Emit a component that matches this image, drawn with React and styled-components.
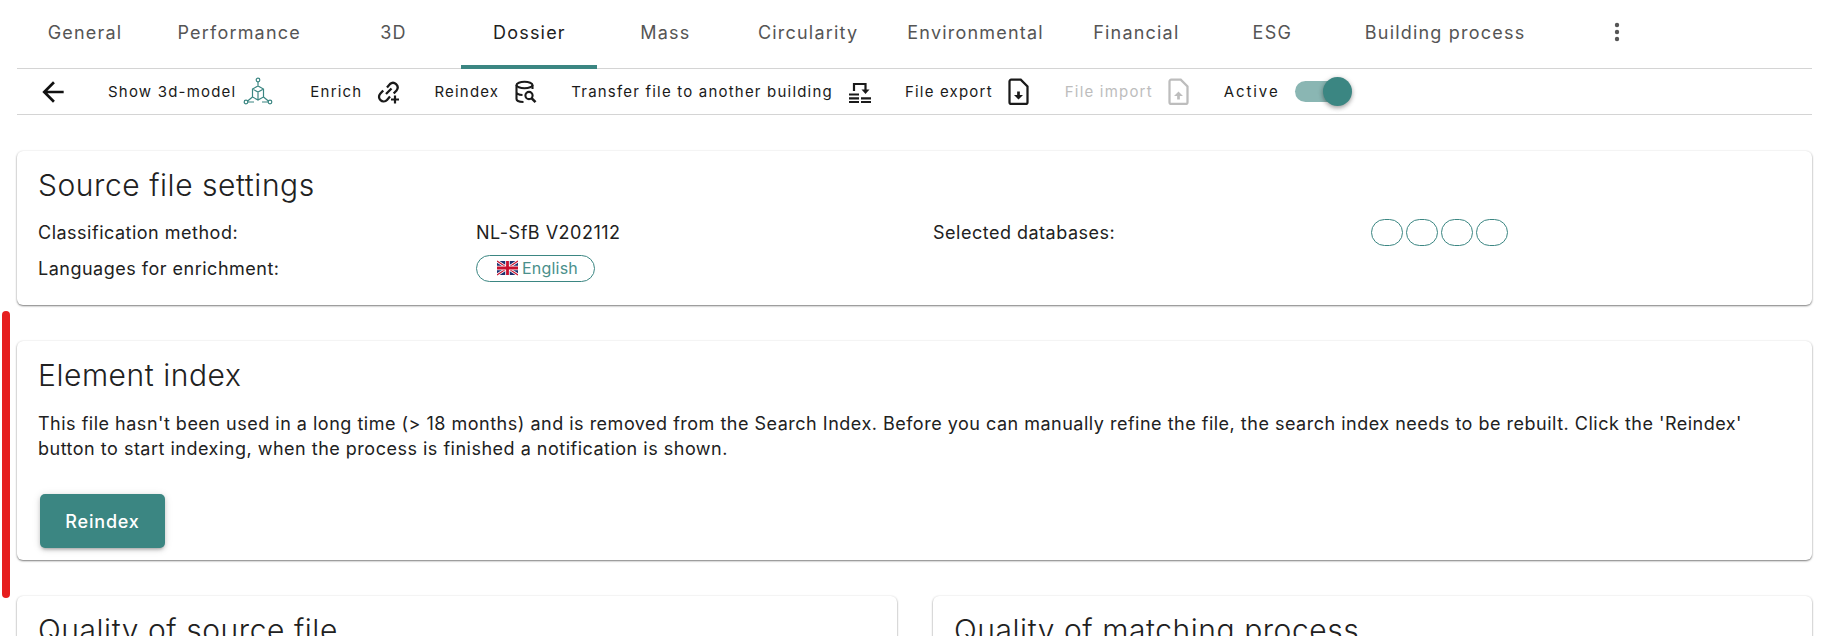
import React from "react";
import styled, { createGlobalStyle } from "styled-components";

const Global = createGlobalStyle`
  html, body { margin: 0; padding: 0; background: #fff; height: 636px; overflow: hidden; }
  body { font-family: Inter, "Liberation Sans", sans-serif; color: #212121; }
`;

const teal = "#3b8682";

const Page = styled.div`
  position: relative;
  height: 636px;
  overflow: hidden;
  padding: 0 9px 0 17px;
`;
const Marker = styled.div`
  position: absolute;
  left: 2px;
  top: 311px;
  width: 8px;
  height: 287px;
  border-radius: 4px;
  background: #e61e1e;
`;
const Tabs = styled.nav`
  display: flex;
  align-items: stretch;
  height: 68px;
  border-bottom: 1px solid #d4d4d4;
`;
const Tab = styled.div`
  position: relative;
  display: flex;
  align-items: center;
  justify-content: center;
  min-width: 136px;
  padding: 0 24.5px 3px;
  box-sizing: border-box;
  font-size: 18px;
  letter-spacing: 1.2px;
  color: ${(p) => (p.$active ? "#212121" : "#555")};
  ${(p) => p.$active && `&::after { content: ""; position: absolute; left: 0; right: 0; bottom: -1px; height: 4px; background: ${teal}; }`}
`;
const Kebab = styled.div`
  display: flex;
  align-items: center;
  justify-content: center;
  width: 48px;
  margin-left: 43px;
  color: #555;
  padding-bottom: 5px;
`;
const Toolbar = styled.div`
  display: flex;
  align-items: center;
  height: 45px;
  border-bottom: 1px solid #d4d4d4;
`;
const Back = styled.div`
  display: flex;
  width: 91px;
  padding-left: 20px;
  box-sizing: border-box;
  color: #111;
`;
const Action = styled.div`
  display: flex;
  align-items: center;
  gap: ${(p) => p.$gap || 15}px;
  margin-right: ${(p) => p.$mr ?? 33}px;
  font-size: 15px;
  letter-spacing: ${(p) => p.$ls || 1.2}px;
  color: ${(p) => (p.$disabled ? "#bdbdbd" : "#1a1a1a")};
`;
const Track = styled.div`
  position: relative;
  width: 45px;
  height: 21px;
  border-radius: 11px;
  background: #8ab6b3;
`;
const Knob = styled.div`
  position: absolute;
  right: -12px;
  top: -4px;
  width: 29px;
  height: 29px;
  border-radius: 50%;
  background: ${teal};
  box-shadow: 0 2px 4px rgba(0,0,0,.3), 0 1px 6px rgba(0,0,0,.12);
`;
const Card = styled.section`
  background: #fff;
  border-radius: 6px;
  box-sizing: border-box;
  padding: 14px 21px 0;
  box-shadow: 0 1px 2px rgba(0,0,0,.5), 0 0 3px rgba(0,0,0,.05);
`;
const Stack = styled.div`
  display: flex;
  flex-direction: column;
  gap: 36px;
  padding-top: 36px;
`;
const Title = styled.h2`
  margin: 0;
  font-size: 30px;
  line-height: 40px;
  font-weight: 300;
  letter-spacing: 0.55px;
  color: #212121;
`;
const SettingsGrid = styled.div`
  display: grid;
  grid-template-columns: 438px 457px 438px 1fr;
  grid-auto-rows: 36px;
  align-items: center;
  margin-top: 9px;
  padding-bottom: 19px;
  font-size: 18px;
  letter-spacing: 0.5px;
`;
const Chips = styled.div`
  display: flex;
  gap: 3px;
`;
const Chip = styled.div`
  display: flex;
  align-items: center;
  justify-content: center;
  gap: 4px;
  box-sizing: border-box;
  width: ${(p) => p.$w}px;
  height: 27px;
  padding-left: ${(p) => (p.$w > 40 ? 4 : 0)}px;
  border: 1px solid ${teal};
  border-radius: 14px;
  color: #4a8f8b;
  font-size: 16px;
  letter-spacing: 0.2px;
`;
const Para = styled.p`
  margin: 16px 0 0;
  font-size: 18px;
  line-height: 25px;
  letter-spacing: 0.5px;
  color: #212121;
`;
const Button = styled.button`
  display: block;
  width: 125px;
  height: 54px;
  margin: 33px 0 12px 2px;
  border: 0;
  border-radius: 5px;
  background: ${teal};
  color: #fff;
  font: 500 18px Inter, sans-serif;
  letter-spacing: 0.8px;
  box-shadow: 0 3px 3px -2px rgba(0,0,0,.2), 0 2px 4px rgba(0,0,0,.14), 0 1px 8px rgba(0,0,0,.12);
`;
const Split = styled.div`
  display: grid;
  grid-template-columns: 880px 879px;
  gap: 36px;
`;

const Ico = ({ children, size = 24, color = "currentColor" }) => (
  <svg width={size} height={size} viewBox="0 0 24 24" fill="none" stroke={color} strokeWidth="2" style={{ display: "block", flex: "none" }}>{children}</svg>
);

const CubeIcon = () => (
  <svg width="30" height="30" viewBox="0 0 30 30" fill="none" stroke={teal} strokeWidth="1.2" style={{ display: "block" }}>
    <circle cx="15" cy="3" r="1.8" /><circle cx="3" cy="25" r="1.8" /><circle cx="27" cy="25" r="1.8" />
    <path d="M15 5v4M9.5 12l5.5-3 5.5 3v8l-5.5 3-5.5-3zM9.5 12l5.5 3 5.5-3M15 15v8M4.6 24l4.9-4M25.4 24l-4.9-4M5 25h6M25 25h-6" />
  </svg>
);
const LinkPlus = () => (
  <Ico>
    <path d="M10 7.5l3-3.5a4.6 4.6 0 0 1 6.7 6.2l-3 3.3" strokeWidth="2.3" />
    <path d="M13 16.5l-3 3.4a4.6 4.6 0 0 1-6.800-6.200l3-3.300" strokeWidth="2.3" />
    <path d="M9 14l5.500-5.500" strokeWidth="2.3" />
    <path d="M18 15.500v8M14 19.500h8" strokeWidth="2.2" />
  </Ico>
);
const DbSearch = () => (
  <Ico>
    <ellipse cx="10.5" cy="5" rx="8" ry="3.2" strokeWidth="2.1" />
    <path d="M2.500 5v14c0 1.700 3 3 7 3M2.500 12c0 1.500 2.500 2.800 6 3M18.500 5v4" strokeWidth="2.1" />
    <circle cx="15" cy="15.5" r="3.6" strokeWidth="2.1" />
    <path d="M17.500 18.200l4 4" strokeWidth="2.6" />
  </Ico>
);
const Transfer = () => (
  <Ico>
    <path d="M6 11V4h11.500v6" strokeWidth="2.2" />
    <path d="M13.500 9.500h8l-4 4.500z" fill="currentColor" stroke="none" />
    <path d="M1 14.500h10M1 18.300h10M1 22h10M13 18.300h10M13 22h10" strokeWidth="2.2" />
  </Ico>
);
const FileIcon = ({ up }) => (
  <Ico size={27}>
    <path d="M5.500 1.500h8.500l6 6v14a1.500 1.500 0 0 1-1.500 1.500h-13A1.500 1.500 0 0 1 4 21.500V3a1.500 1.500 0 0 1 1.500-1.500z" strokeWidth="2" />
    {up
      ? <path d="M12 12l-4 4h2.800v3h2.400v-3H16z" fill="currentColor" stroke="none" />
      : <path d="M12 19l-4-4h2.800v-3h2.400v3H16z" fill="currentColor" stroke="none" />}
  </Ico>
);

const tabs = ["General", "Performance", "3D", "Dossier", "Mass", "Circularity", "Environmental", "Financial", "ESG", "Building process"];

export default function App() {
  return (
    <Page>
      <Global />
      <Marker />
      <Tabs>
        {tabs.map((t) => <Tab key={t} $active={t === "Dossier"}>{t}</Tab>)}
        <Kebab>
          <svg width="24" height="24" viewBox="0 0 24 24" fill="currentColor"><circle cx="12" cy="5" r="2.2" /><circle cx="12" cy="12" r="2.2" /><circle cx="12" cy="19" r="2.2" /></svg>
        </Kebab>
      </Tabs>
      <Toolbar>
        <Back>
          <svg width="32" height="32" viewBox="0 0 24 24" fill="currentColor"><path d="M20 11H7.830l5.590-5.590L12 4l-8 8 8 8 1.410-1.410L7.830 13H20v-2z" /></svg>
        </Back>
        <Action $gap={7} $mr={37}>Show 3d-model <CubeIcon /></Action>
        <Action $mr={33}>Enrich <LinkPlus /></Action>
        <Action $mr={33}>Reindex <DbSearch /></Action>
        <Action $mr={33}>Transfer file to another building <Transfer /></Action>
        <Action $gap={12} $mr={33}>File export <FileIcon /></Action>
        <Action $disabled $gap={12} $mr={32}>File import <FileIcon up /></Action>
        <Action $ls={1.9} $mr={0}>Active <Track><Knob /></Track></Action>
      </Toolbar>
      <Stack>
        <Card>
          <Title>Source file settings</Title>
          <SettingsGrid>
            <div>Classification method:</div>
            <div>NL-SfB V202112</div>
            <div>Selected databases:</div>
            <Chips><Chip $w={32} /><Chip $w={32} /><Chip $w={32} /><Chip $w={32} /></Chips>
            <div>Languages for enrichment:</div>
            <div>
              <Chip $w={119}>
                <svg width="21" height="16" viewBox="0 0 60 40">
                  <rect width="60" height="40" fill="#1d2f6f" />
                  <path d="M0 0l60 40M60 0L0 40" stroke="#fff" strokeWidth="8" />
                  <path d="M0 0l60 40M60 0L0 40" stroke="#c8102e" strokeWidth="3" />
                  <path d="M30 0v40M0 20h60" stroke="#fff" strokeWidth="13" />
                  <path d="M30 0v40M0 20h60" stroke="#c8102e" strokeWidth="8" />
                </svg>
                English
              </Chip>
            </div>
          </SettingsGrid>
        </Card>
        <Card>
          <Title>Element index</Title>
          <Para>This file hasn't been used in a long time (&gt; 18 months) and is removed from the Search Index. Before you can manually refine the file, the search index needs to be rebuilt. Click the 'Reindex' button to start indexing, when the process is finished a notification is shown.</Para>
          <Button>Reindex</Button>
        </Card>
        <Split>
          <Card><Title>Quality of source file</Title></Card>
          <Card><Title>Quality of matching process</Title></Card>
        </Split>
      </Stack>
    </Page>
  );
}
